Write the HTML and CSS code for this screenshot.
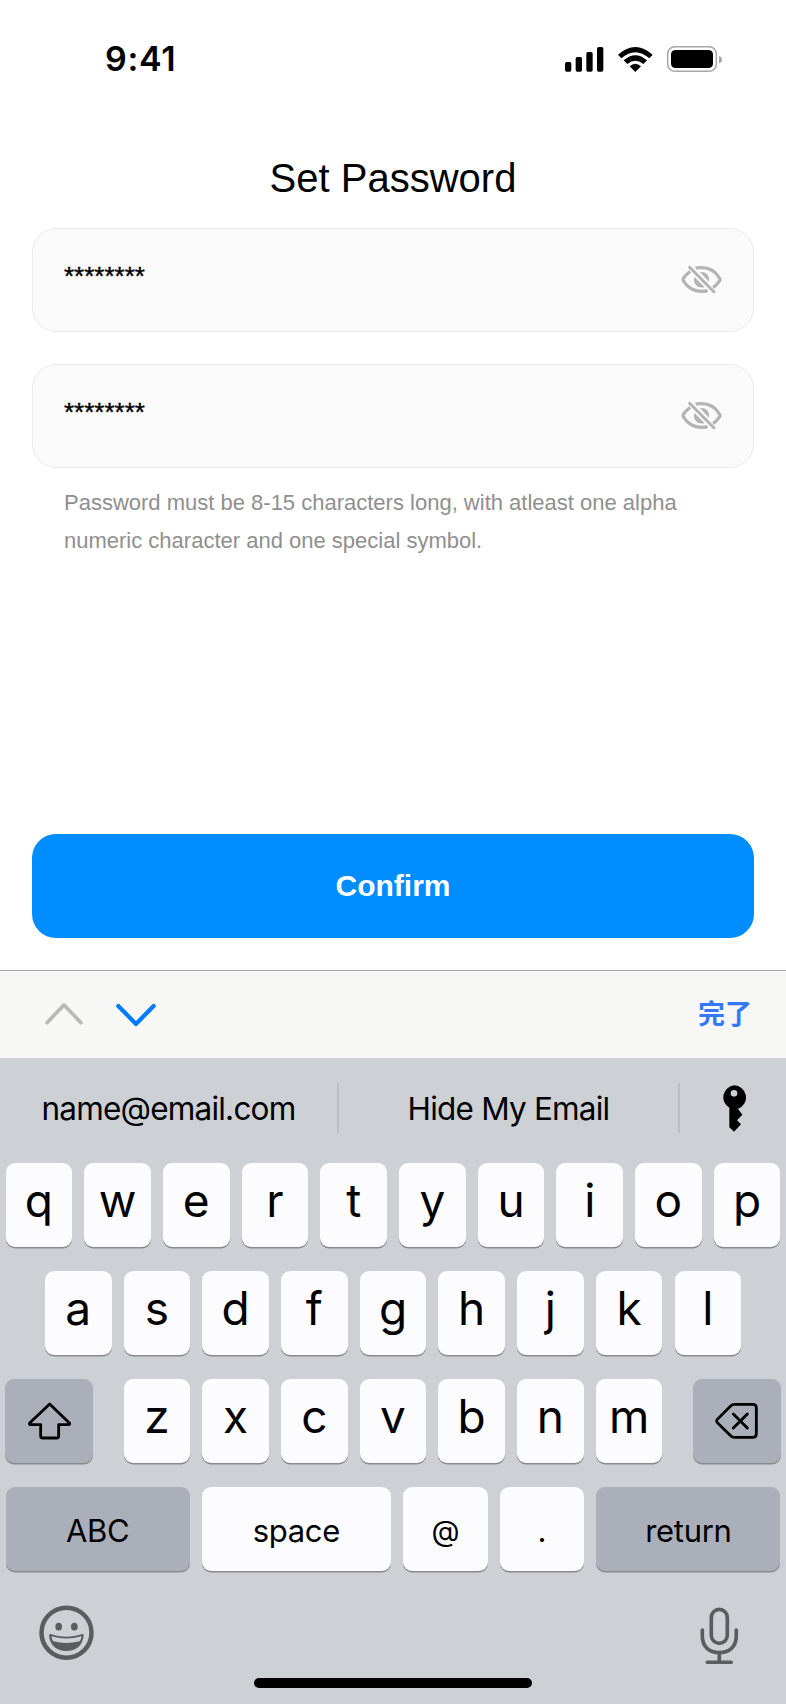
FILE: index.html
```html
<!DOCTYPE html>
<html lang="en">
<head>
<meta charset="utf-8">
<title>Set Password</title>
<link rel="stylesheet" href="styles.css">
</head>
<body>
<svg class="defs" width="0" height="0" aria-hidden="true">
  <symbol id="eye-off" viewBox="0 0 126 90">
    <g fill="none" stroke="currentColor" stroke-width="10" stroke-linecap="butt">
      <path d="M45 9.500Q50 8 63 8C91 8 110 25 119 41Q122 45 119 49Q112 61 99 70"/>
      <path d="M28 20Q14 30 7 41Q4 45 7 49C16 66 36 82 63 82Q73 82 82 79.500"/>
    </g>
    <path d="M58 22A24 24 0 0 1 86 51Z" fill="currentColor"/>
    <path d="M41 37A24 24 0 0 0 72 68Z" fill="currentColor"/>
    <path d="M26 7L102 84" stroke="currentColor" stroke-width="8.500" stroke-linecap="round"/>
  </symbol>
</svg>
<main class="screen">
  <header class="status">
    <span class="time">9:41</span>
    <svg class="signal" viewBox="75 45 471 84">
      <rect x="75" y="96" width="19" height="29" rx="5"/>
      <rect x="107" y="81" width="19" height="44" rx="5"/>
      <rect x="139" y="66" width="19" height="59" rx="5"/>
      <rect x="171" y="51" width="19" height="74" rx="5"/>
      <path d="M234 74Q286 28 338 74L328 85Q286 49 244 85Z"/>
      <path d="M251 91Q286 60 321 91L310 102Q286 82 262 102Z"/>
      <path d="M269 109Q286 94 303 109L286 126Z"/>
      <rect x="383" y="50" width="146" height="74" rx="22" fill="none" stroke="#a6a6a6" stroke-width="4.500"/>
      <rect x="393" y="60" width="126" height="54" rx="13"/>
      <path d="M537 78Q546 81 546 89Q546 97 537 100Z" fill="#a6a6a6"/>
    </svg>
  </header>
  <h1 class="title">Set Password</h1>
  <section class="fields">
    <div class="field"><span class="mask">********</span><svg class="eye"><use href="#eye-off"/></svg></div>
    <div class="field"><span class="mask">********</span><svg class="eye"><use href="#eye-off"/></svg></div>
  </section>
  <p class="hint">Password must be 8-15 characters long, with atleast one alpha<br>numeric character and one special symbol.</p>
  <button class="confirm">Confirm</button>
  <div class="toolbar">
    <svg class="arrows" viewBox="132 125 340 78" fill="none" stroke-linecap="round" stroke-linejoin="round">
      <path d="M141 187L192 134L243 187" stroke="#b9b9b9" stroke-width="11"/>
      <path d="M355 137L408 191L461 137" stroke="#007aff" stroke-width="12.500"/>
    </svg>
    <span class="done">完了</span>
  </div>
  <section class="keyboard">
    <div class="suggestions">
      <span class="suggestion email">name@email.com</span>
      <span class="suggestion hide">Hide My Email</span>
      <span class="keybox"><svg class="pass" viewBox="996 375 72 141">
        <path fill-rule="evenodd" d="M1032 376A36 36 0 0 1 1044 446L1057 464L1041 481L1053 493L1032 515L1018 502V443A36 36 0 0 1 1032 376ZM1032 390A10 10 0 1 0 1032 410A10 10 0 1 0 1032 390Z"/>
      </svg></span>
    </div>
    <div class="row"><kbd>q</kbd><kbd>w</kbd><kbd>e</kbd><kbd>r</kbd><kbd>t</kbd><kbd>y</kbd><kbd>u</kbd><kbd>i</kbd><kbd>o</kbd><kbd>p</kbd></div>
    <div class="row"><kbd>a</kbd><kbd>s</kbd><kbd>d</kbd><kbd>f</kbd><kbd>g</kbd><kbd>h</kbd><kbd>j</kbd><kbd>k</kbd><kbd>l</kbd></div>
    <div class="row spread">
      <kbd class="dark shift"><svg class="glyph" viewBox="86 96 129 114"><path d="M151 102L91 159Q89 164 95 164H124V198Q124 204 130 204H172Q178 204 178 198V164H207Q213 164 210 159Z" fill="none" stroke="#000" stroke-width="8.500" stroke-linejoin="round"/></svg></kbd>
      <span class="letters"><kbd>z</kbd><kbd>x</kbd><kbd>c</kbd><kbd>v</kbd><kbd>b</kbd><kbd>n</kbd><kbd>m</kbd></span>
      <kbd class="dark shift"><svg class="glyph" viewBox="963 96 129 114"><path d="M1021 103H1076Q1087 103 1087 114V191Q1087 202 1076 202H1021Q1015 202 1010 197L970 158Q966 153 970 148L1010 108Q1015 103 1021 103Z" fill="none" stroke="#000" stroke-width="8.500"/><path d="M1018 132L1060 174M1060 132L1018 174" stroke="#000" stroke-width="8.500" stroke-linecap="round"/></svg></kbd>
    </div>
    <div class="row word">
      <kbd class="dark abc">ABC</kbd><kbd class="space">space</kbd><kbd class="sym at">@</kbd><kbd class="sym">.</kbd><kbd class="dark return">return</kbd>
    </div>
    <div class="bottom">
      <svg class="emoji" viewBox="117 705 165 165">
        <circle cx="199.500" cy="788" r="75" fill="none" stroke="#5a5c60" stroke-width="13.500"/>
        <ellipse cx="176" cy="770" rx="10" ry="11.500" fill="#5a5c60"/><ellipse cx="223" cy="770" rx="10" ry="11.500" fill="#5a5c60"/>
        <path fill-rule="evenodd" d="M152 792Q199 809 247 792Q252 791 251 797C249 825 228 843 199 843C171 843 149 825 147 797Q147 791 152 792ZM155 799C155 806 157 810 160 814Q199 824 239 814C242 810 244 806 244 799Q199 812 155 799Z" fill="#5a5c60"/>
      </svg>
      <svg class="mic" viewBox="923 713 116 174" fill="none" stroke="#5a5c60" stroke-width="11" stroke-linecap="round">
        <rect x="957" y="720" width="48" height="102" rx="24"/>
        <path d="M930 782V800C930 832 951 850 981 850S1032 832 1032 800V782M981 850V879M945 879H1017"/>
      </svg>
    </div>
    <div class="home"></div>
  </section>
</main>
</body>
</html>
```
FILE: styles.css
```css
* { box-sizing: border-box; }
body { margin: 0; background: #fff; font-family: "Liberation Sans", Arial, sans-serif; color: #000; }
.defs { display: block; height: 0; }
.screen { width: 786px; height: 1704px; display: flex; flex-direction: column; overflow: hidden; }
.status { height: 118px; flex: none; display: flex; justify-content: space-between; padding: 39px 64px 0 105px; }
.time { font: 600 34px/40px Inter, sans-serif; letter-spacing: 0.700px; }
.signal { width: 157px; height: 28px; margin-top: 6px; }
.title { margin: 37px 0 0; height: 73px; font-size: 40px; line-height: 46px; font-weight: 400; text-align: center; }
.fields { display: flex; flex-direction: column; gap: 32px; padding: 0 32px; }
.field { height: 104px; display: flex; align-items: center; justify-content: space-between; padding: 0 31px; border: 1px solid #ebebeb; border-radius: 24px; background: #fafafa; }
.mask { font-size: 26px; line-height: 30px; padding-bottom: 8px; -webkit-text-stroke: 0.400px #000; }
.eye { width: 41px; height: 29px; margin-bottom: 1px; color: #b3b3b3; }
.hint { margin: 16px 64px 0; height: 350px; font-size: 22px; line-height: 38px; color: #8f8f8f; white-space: nowrap; }
.confirm { flex: none; margin: 0 32px; height: 104px; border: 0; border-radius: 24px; background: #008dff; color: #fff; font: 700 30px/34px "Liberation Sans", Arial, sans-serif; }
.toolbar { flex: none; margin-top: 32px; height: 88px; display: flex; justify-content: space-between; border-top: 1px solid #a9a9ac; background: #f7f7f5; padding: 30px 34px 0 44px; }
.arrows { width: 113.300px; height: 26px; margin-top: 1px; }
.done { font: 700 27px/30px "Noto Sans CJK SC", sans-serif; color: #3478f6; margin-top: -3px; }
.keyboard { flex: 1; background: #cdd0d4; font-family: Inter, sans-serif; }
.suggestions { height: 105px; padding-top: 25px; display: grid; grid-template-columns: 339px 341px 106px; }
.suggestion { height: 50px; display: flex; align-items: center; justify-content: center; border-right: 2px solid #bbbdc1; font-size: 31.500px; padding-top: 1px; letter-spacing: -0.800px; }
.keybox { display: flex; padding: 2px 0 0 41.500px; }
.pass { width: 24px; height: 47px; }
.row { height: 84px; margin-bottom: 24px; display: flex; justify-content: center; gap: 12.200px; }
.spread { justify-content: space-between; padding: 0 5.300px; }
.letters { display: flex; gap: 12.200px; }
kbd { flex: none; width: 66.500px; height: 84px; display: flex; align-items: center; justify-content: center; border-radius: 9px; background: #fcfcfe; box-shadow: 0 1.500px 0 #898a8d; font: 400 46px/56px Inter, sans-serif; padding-bottom: 11px; }
.dark { background: #abafba; }
kbd.shift { width: 88px; padding: 0 0 1px; }
.glyph { width: 43px; height: 38px; }
.word { gap: 12px; }
.word kbd { font-size: 31px; padding: 3px 0 0; letter-spacing: -0.300px; }
kbd.abc, kbd.return { width: 184.200px; }
kbd.space { width: 189.200px; }
kbd.sym { width: 84.700px; }
.word kbd.at { font-size: 29px; }
.bottom { display: flex; justify-content: space-between; padding: 10px 47px 0 39px; height: 82.500px; }
.emoji { width: 55px; height: 55px; }
.mic { width: 38.600px; height: 58px; margin-top: 2px; }
.home { width: 278px; height: 10px; margin: 0 auto; border-radius: 5px; background: #000; }
```
